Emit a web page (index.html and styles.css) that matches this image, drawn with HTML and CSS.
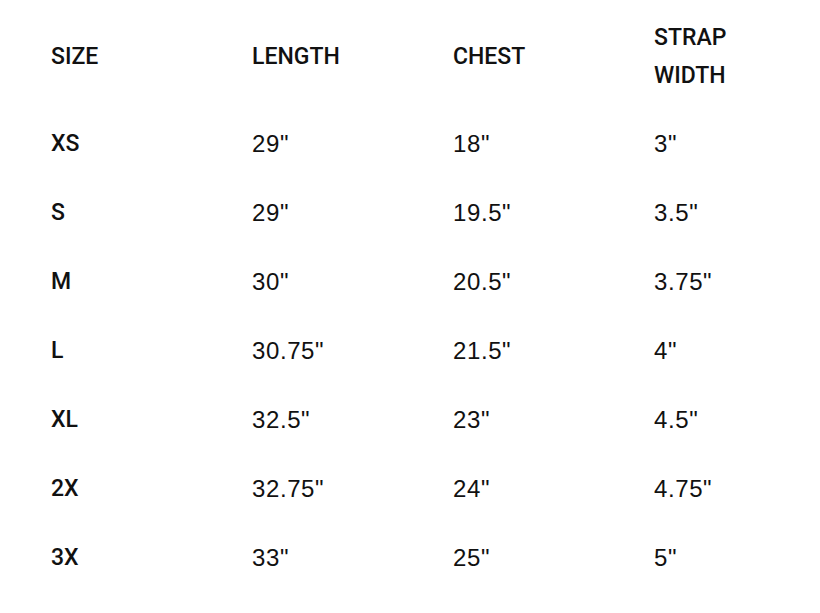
FILE: index.html
```html
<!DOCTYPE html>
<html>
<head>
<meta charset="utf-8">
<link rel="stylesheet" href="styles.css">
</head>
<body>
<div class="chart">
  <div class="row head">
    <div class="cell">SIZE</div>
    <div class="cell">LENGTH</div>
    <div class="cell">CHEST</div>
    <div class="cell">STRAP<br>WIDTH</div>
  </div>
  <div class="body">
    <div class="row"><div class="cell size">XS</div><div class="cell">29"</div><div class="cell">18"</div><div class="cell">3"</div></div>
    <div class="row"><div class="cell size">S</div><div class="cell">29"</div><div class="cell">19.5"</div><div class="cell">3.5"</div></div>
    <div class="row"><div class="cell size">M</div><div class="cell">30"</div><div class="cell">20.5"</div><div class="cell">3.75"</div></div>
    <div class="row"><div class="cell size">L</div><div class="cell">30.75"</div><div class="cell">21.5"</div><div class="cell">4"</div></div>
    <div class="row"><div class="cell size">XL</div><div class="cell">32.5"</div><div class="cell">23"</div><div class="cell">4.5"</div></div>
    <div class="row"><div class="cell size">2X</div><div class="cell">32.75"</div><div class="cell">24"</div><div class="cell">4.75"</div></div>
    <div class="row"><div class="cell size">3X</div><div class="cell">33"</div><div class="cell">25"</div><div class="cell">5"</div></div>
  </div>
</div>
</body>
</html>
```

FILE: styles.css
```css
html, body {
  margin: 0;
  padding: 0;
  background: #ffffff;
}
body {
  width: 820px;
  height: 613px;
  overflow: hidden;
  font-family: Roboto, "Liberation Sans", Arial, sans-serif;
  color: #111111;
}
.chart {
  padding: 19px 0 0 51px;
}
.row {
  display: grid;
  grid-template-columns: 201px 201px 201px 201px;
  align-items: center;
}
.head {
  height: 76px;
  font-size: 23px;
  font-weight: 500;
  line-height: 38px;
}
.body {
  margin-top: 13.5px;
}
.body .row {
  height: 69px;
  line-height: 69px;
  font-family: "Liberation Sans", Arial, sans-serif;
  font-size: 24px;
  font-weight: 400;
  letter-spacing: 0.6px;
}
.body .cell.size {
  font-family: Roboto, "Liberation Sans", Arial, sans-serif;
  font-weight: 500;
  font-size: 23px;
  letter-spacing: 0;
}
```
